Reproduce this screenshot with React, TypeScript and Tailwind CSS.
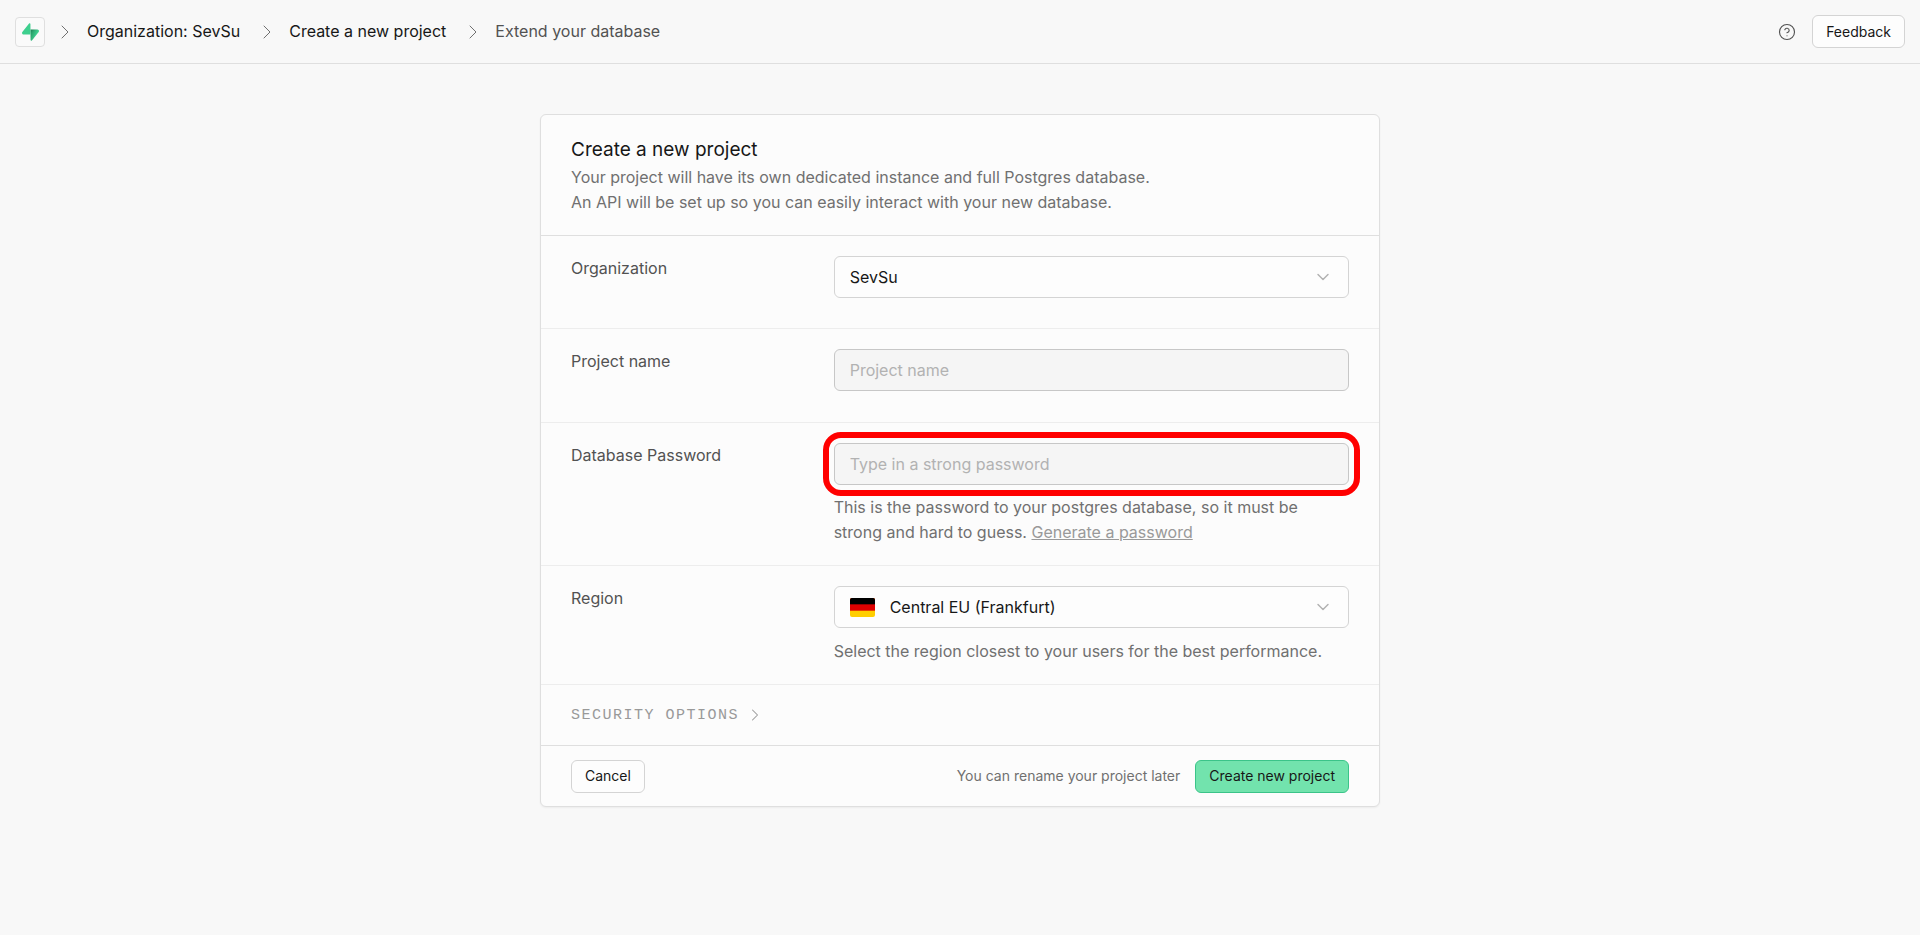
import { ReactNode } from "react";
import { ChevronDown, ChevronRight } from "lucide-react";

function Logo() {
  return (
    <svg viewBox="0 0 109 113" className="h-[18px] w-[17px]" aria-hidden="true">
      <defs>
        <linearGradient id="bolt" x1="53.97" y1="54.97" x2="94.16" y2="71.83" gradientUnits="userSpaceOnUse">
          <stop stopColor="#249361" />
          <stop offset="1" stopColor="#3ECF8E" />
        </linearGradient>
        <linearGradient id="shade" x1="36.16" y1="30.58" x2="54.48" y2="65.08" gradientUnits="userSpaceOnUse">
          <stop />
          <stop offset="1" stopOpacity="0" />
        </linearGradient>
      </defs>
      <path
        d="M63.7076 110.284C60.8481 113.885 55.0502 111.912 54.9813 107.314L53.9738 40.0627L99.1935 40.0627C107.384 40.0627 111.952 49.5228 106.859 55.9374L63.7076 110.284Z"
        fill="url(#bolt)"
      />
      <path
        d="M63.7076 110.284C60.8481 113.885 55.0502 111.912 54.9813 107.314L53.9738 40.0627L99.1935 40.0627C107.384 40.0627 111.952 49.5228 106.859 55.9374L63.7076 110.284Z"
        fill="url(#shade)"
        fillOpacity="0.2"
      />
      <path
        d="M45.317 2.07103C48.1765 -1.53037 53.9745 0.442937 54.0434 5.041L54.4849 72.2922H9.83113C1.64038 72.2922 -2.92775 62.8321 2.1655 56.4175L45.317 2.07103Z"
        fill="#3ECF8E"
      />
    </svg>
  );
}

function HelpIcon() {
  return (
    <svg
      viewBox="0 0 24 24"
      className="size-[18px]"
      fill="none"
      stroke="currentColor"
      strokeWidth="1.5"
      strokeLinecap="round"
      strokeLinejoin="round"
      aria-hidden="true"
    >
      <circle cx="12" cy="12" r="10" />
      <path d="M9.09 9a3 3 0 0 1 5.83 1c0 2-3 3-3 3" />
      <path d="M12 17h.01" />
    </svg>
  );
}

function GermanFlag() {
  return (
    <svg viewBox="0 0 25 19" className="h-[19px] w-[25px] rounded-xs" aria-hidden="true">
      <rect width="25" height="19" fill="#ffce00" />
      <rect width="25" height="12.67" fill="#dd0000" />
      <rect width="25" height="6.33" fill="#000" />
    </svg>
  );
}

function Crumb({ children, current = false }: { children: ReactNode; current?: boolean }) {
  return (
    <li className="flex items-center gap-[10px]">
      <ChevronRight className="size-6 text-[#707070]" strokeWidth={1} aria-hidden="true" />
      {current ? (
        <span className="text-[#525252]" aria-current="page">{children}</span>
      ) : (
        <a href="#" className="text-[#171717]">{children}</a>
      )}
    </li>
  );
}

function Row({ id, label, className, children }: { id: string; label: string; className: string; children: ReactNode }) {
  return (
    <div className={`grid grid-cols-[1fr_2fr] gap-[5px] border-b border-[#ededed] px-[30px] pt-5 ${className}`}>
      <label htmlFor={id} className="self-start text-[#525252]">{label}</label>
      <div>{children}</div>
    </div>
  );
}

const inputClass =
  "block h-[42px] w-full rounded-md border border-[#c7c7c7] bg-[#f5f5f5] px-[15px] text-[#171717] outline-none placeholder:text-[#b2b2b2]";

function Select({ id, option, icon }: { id: string; option: string; icon?: ReactNode }) {
  return (
    <div className="relative">
      <select
        id={id}
        className={`block h-[42px] w-full appearance-none rounded-md border border-[#d4d4d4] bg-[#fdfdfd] pr-10 text-[#171717] outline-none ${icon ? "pl-[55px]" : "pl-[15px]"}`}
      >
        <option>{option}</option>
      </select>
      {icon && <span className="pointer-events-none absolute inset-y-0 left-4 flex items-center">{icon}</span>}
      <span className="pointer-events-none absolute inset-y-0 right-4 flex items-center text-[#b2b2b2]">
        <ChevronDown className="size-5" strokeWidth={1.75} aria-hidden="true" />
      </span>
    </div>
  );
}

const buttonClass = "h-[33px] rounded-md border px-[13px] text-sm text-[#171717]";

export default function App() {
  return (
    <div className="min-h-screen bg-[#f8f8f8] font-['Inter',sans-serif] text-base leading-[25px]">
      <header className="flex h-16 items-center justify-between border-b border-[#dfdfdf] px-[15px]">
        <nav aria-label="Breadcrumb" className="flex items-center gap-2">
          <a
            href="#"
            aria-label="Home"
            className="flex size-[30px] items-center justify-center rounded-sm border border-[#dfdfdf] bg-[#fafafa]"
          >
            <Logo />
          </a>
          <ol className="flex items-center gap-[15px]">
            <Crumb>Organization: SevSu</Crumb>
            <Crumb>Create a new project</Crumb>
            <Crumb current>Extend your database</Crumb>
          </ol>
        </nav>
        <div className="flex items-center gap-4">
          <button type="button" aria-label="Help" className="text-[#525252]">
            <HelpIcon />
          </button>
          <button type="button" className={`${buttonClass} border-[#d4d4d4] bg-[#fdfdfd]`}>Feedback</button>
        </div>
      </header>

      <main className="px-5 pt-[50px] pb-10">
        <form
          onSubmit={(event) => event.preventDefault()}
          className="mx-auto w-full max-w-[840px] rounded-md border border-[#dfdfdf] bg-[#fcfcfc] shadow-xs"
        >
          <div className="border-b border-[#dfdfdf] px-[30px] py-5">
            <h1 className="text-[19px] leading-[30px] text-[#171717]">Create a new project</h1>
            <p className="text-[#707070]">
              Your project will have its own dedicated instance and full Postgres database.
              <br />
              An API will be set up so you can easily interact with your new database.
            </p>
          </div>

          <Row id="organization" label="Organization" className="pb-[30px]">
            <Select id="organization" option="SevSu" />
          </Row>

          <Row id="project-name" label="Project name" className="pb-[31px]">
            <input id="project-name" type="text" placeholder="Project name" className={inputClass} />
          </Row>

          <Row id="password" label="Database Password" className="pb-5">
            <div className="relative">
              <input id="password" type="password" placeholder="Type in a strong password" className={inputClass} />
              <span className="pointer-events-none absolute -inset-[11px] rounded-[18px] border-6 border-[#ff0000]" />
            </div>
            <p className="mt-[10px] text-[#707070]">
              This is the password to your postgres database, so it must be strong and hard to guess.{" "}
              <a href="#" className="text-[#999999] underline">Generate a password</a>
            </p>
          </Row>

          <Row id="region" label="Region" className="pb-5">
            <Select id="region" option="Central EU (Frankfurt)" icon={<GermanFlag />} />
            <p className="mt-[11px] text-[#707070]">
              Select the region closest to your users for the best performance.
            </p>
          </Row>

          <div className="flex h-[61px] items-center border-b border-[#dfdfdf] px-[30px]">
            <button
              type="button"
              className="flex items-center gap-1.5 font-['Liberation_Mono',monospace] text-[15px] tracking-widest text-[#999999] uppercase"
            >
              Security options
              <ChevronRight className="size-5" strokeWidth={1.25} aria-hidden="true" />
            </button>
          </div>

          <div className="flex h-[60px] items-center justify-between px-[30px]">
            <button type="button" className={`${buttonClass} border-[#d4d4d4] bg-[#fdfdfd]`}>Cancel</button>
            <div className="flex items-center gap-[15px]">
              <p className="text-sm text-[#707070]">You can rename your project later</p>
              <button type="submit" className={`${buttonClass} border-[#3bc489] bg-[#72e3ad]`}>Create new project</button>
            </div>
          </div>
        </form>
      </main>
    </div>
  );
}
